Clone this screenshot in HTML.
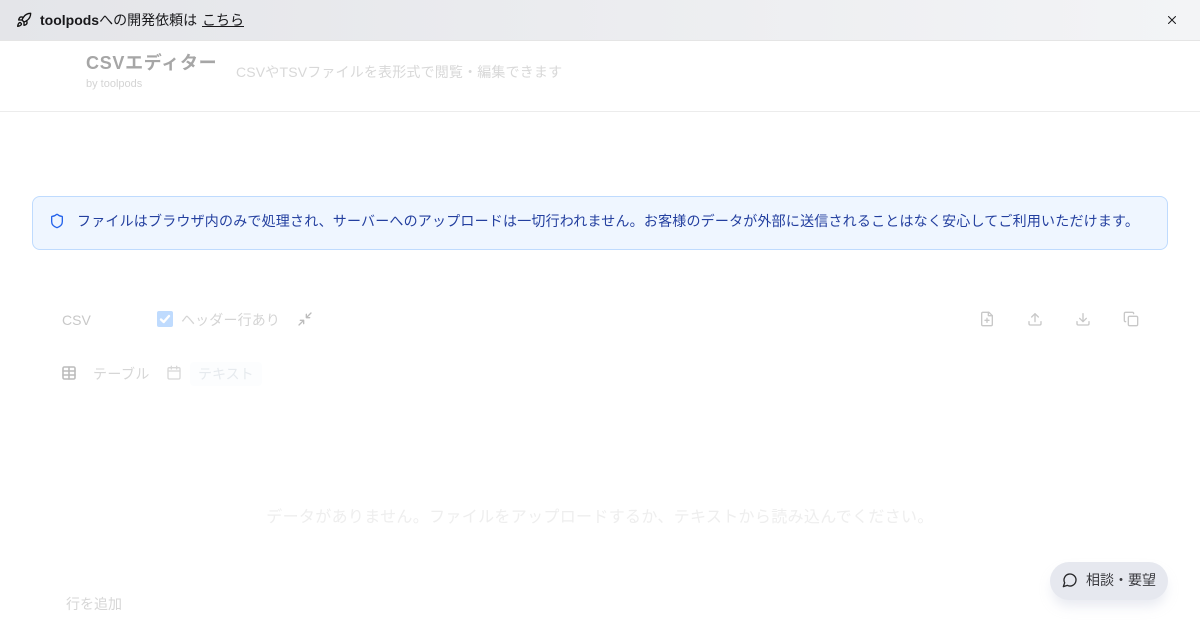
<!DOCTYPE html>
<html lang="ja"><head><meta charset="utf-8"><title>CSVエディター</title>
<style>
*{box-sizing:border-box}
html,body{margin:0;padding:0;width:1200px;height:630px;overflow:hidden;background:#fff;font-family:"Liberation Sans","Noto Sans CJK JP",sans-serif}
.a{position:absolute;white-space:nowrap}
svg{position:absolute;fill:none;stroke-linecap:round;stroke-linejoin:round}
.b{filter:blur(.3px)}
</style></head><body>
<div class="a" style="left:0;top:0;width:1200px;height:41px;background:linear-gradient(90deg,#e4e5e9,#f3f4f6);border-bottom:1px solid #e5e5e5"></div>
<svg style="left:16px;top:12px" width="16" height="16" viewBox="0 0 24 24" stroke="#111" stroke-width="2"><path d="M4.500 16.500c-1.500 1.300-2 5-2 5s3.700-.5 5-2c.7-.8.7-2.100-.1-2.900a2.200 2.200 0 0 0-2.900-.1z"/><path d="M12 15l-3-3a22 22 0 0 1 2-3.900A12.900 12.900 0 0 1 22 2c0 2.700-.8 7.500-6 11a22 22 0 0 1-4 2z"/><path d="M9 12H4s.6-3 2-4c1.600-1.100 5 0 5 0"/><path d="M12 15v5s3-.6 4-2c1.100-1.600 0-5 0-5"/></svg>
<div class="a" style="left:40px;top:10px;font-size:14px;line-height:20px;color:#18181b"><span style="font-weight:600">toolpods</span>への開発依頼は <a style="color:#18181b;text-decoration:underline;margin-left:1px">こちら</a></div>
<svg style="left:1166px;top:14px" width="12" height="12" viewBox="0 0 12 12" stroke="#18181b" stroke-width="1"><path d="M2.500 2.500l7 7M9.500 2.500l-7 7"/></svg>

<div class="a b" style="left:86px;top:51px;font-size:18px;line-height:24px;font-weight:700;letter-spacing:.7px;color:#a6a6a6">CSVエディター</div>
<div class="a b" style="left:86px;top:77px;font-size:11px;line-height:14px;color:#d4d4d4">by toolpods</div>
<div class="a b" style="left:236px;top:62px;font-size:14px;line-height:20px;letter-spacing:.17px;color:#d8d8d8">CSVやTSVファイルを表形式で閲覧・編集できます</div>
<div class="a" style="left:0;top:111px;width:1200px;height:1px;background:#ececec"></div>

<div class="a" style="left:32px;top:196px;width:1136px;height:54px;background:#eff6ff;border:1px solid #bfdbfe;border-radius:8px"></div>
<svg style="left:49px;top:213px" width="16" height="16" viewBox="0 0 24 24" stroke="#2563eb" stroke-width="2"><path d="M20 13c0 5-3.500 7.500-7.700 8.900a1 1 0 0 1-.6 0C7.500 20.500 4 18 4 13V6a1 1 0 0 1 1-1c2 0 4.500-1.200 6.200-2.700a1.200 1.200 0 0 1 1.600 0C14.500 3.800 17 5 19 5a1 1 0 0 1 1 1z"/></svg>
<div class="a" style="left:77px;top:211px;font-size:14px;line-height:20px;letter-spacing:.2px;color:#233f9f">ファイルはブラウザ内のみで処理され、サーバーへのアップロードは一切行われません。お客様のデータが外部に送信されることはなく安心してご利用いただけます。</div>

<div class="a b" style="left:62px;top:310px;font-size:14px;line-height:20px;color:#c8c8c8">CSV</div>
<div class="a" style="left:157px;top:311px;width:16px;height:16px;border-radius:2px;background:#bfdbfe"></div>
<svg style="left:157px;top:311px" width="16" height="16" viewBox="0 0 16 16" stroke="#fff" stroke-width="2.400"><path d="M4 8.500l2.700 2.500L12 5"/></svg>
<div class="a b" style="left:181px;top:310px;font-size:14px;line-height:20px;letter-spacing:.15px;color:#d4d4d4">ヘッダー行あり</div>
<svg class="b" style="left:297px;top:311px" width="16" height="16" viewBox="0 0 24 24" stroke="#bcbcbc" stroke-width="2"><path d="M14 10l7-7M14 5v5h5M10 14l-7 7M5 14h5v5"/></svg>

<svg class="b" style="left:979px;top:311px" width="16" height="16" viewBox="0 0 24 24" stroke="#c8c8c8" stroke-width="2"><path d="M15 2H6a2 2 0 0 0-2 2v16a2 2 0 0 0 2 2h12a2 2 0 0 0 2-2V7z"/><path d="M14 2v5h6M12 11v6M9 14h6"/></svg>
<svg class="b" style="left:1027px;top:311px" width="16" height="16" viewBox="0 0 24 24" stroke="#c8c8c8" stroke-width="2"><path d="M3 16v3a2 2 0 0 0 2 2h14a2 2 0 0 0 2-2v-3M12 16V4M7 9l5-5 5 5"/></svg>
<svg class="b" style="left:1075px;top:311px" width="16" height="16" viewBox="0 0 24 24" stroke="#c8c8c8" stroke-width="2"><path d="M3 16v3a2 2 0 0 0 2 2h14a2 2 0 0 0 2-2v-3M12 4v12M7 11l5 5 5-5"/></svg>
<svg class="b" style="left:1123px;top:311px" width="16" height="16" viewBox="0 0 24 24" stroke="#c8c8c8" stroke-width="2"><rect x="8" y="8" width="14" height="14" rx="2"/><path d="M4 16a2 2 0 0 1-2-2V4a2 2 0 0 1 2-2h10a2 2 0 0 1 2 2"/></svg>

<svg class="b" style="left:61px;top:365px" width="16" height="16" viewBox="0 0 24 24" stroke="#bcbcbc" stroke-width="2.400"><rect x="3" y="3" width="18" height="18" rx="2"/><path d="M3 9h18M3 15h18M12 3v18"/></svg>
<div class="a b" style="left:93px;top:364px;font-size:14px;line-height:20px;letter-spacing:.4px;color:#d6d6d6">テーブル</div>
<svg class="b" style="left:166px;top:365px" width="16" height="16" viewBox="0 0 24 24" stroke="#d8d8d8" stroke-width="2"><rect x="3" y="4" width="18" height="17" rx="2"/><path d="M3 9h18M8 2v4M16 2v4"/></svg>
<div class="a" style="left:190px;top:362px;width:72px;height:24px;border-radius:4px;background:#fcfdfe"></div>
<div class="a b" style="left:198px;top:364px;font-size:14px;line-height:20px;color:#e6eaee">テキスト</div>

<div class="a b" style="left:0;width:1200px;text-align:center;top:507px;font-size:16px;line-height:22px;letter-spacing:.33px;color:#eeeeee">データがありません。ファイルをアップロードするか、テキストから読み込んでください。</div>
<div class="a b" style="left:66px;top:594px;font-size:14px;line-height:20px;color:#d6d6d6">行を追加</div>

<div class="a" style="left:1050px;top:562px;width:118px;height:38px;border-radius:19px;background:#e6e8ef;box-shadow:0 8px 12px -2px rgba(190,195,215,.35)"></div>
<svg style="left:1062px;top:572px" width="16" height="16" viewBox="0 0 24 24" stroke="#27272a" stroke-width="2"><path d="M7.900 20A9 9 0 1 0 4 16.100L2 22z"/></svg>
<div class="a" style="left:1086px;top:570px;font-size:14px;line-height:20px;color:#3a3a3f">相談・要望</div>
</body></html>
